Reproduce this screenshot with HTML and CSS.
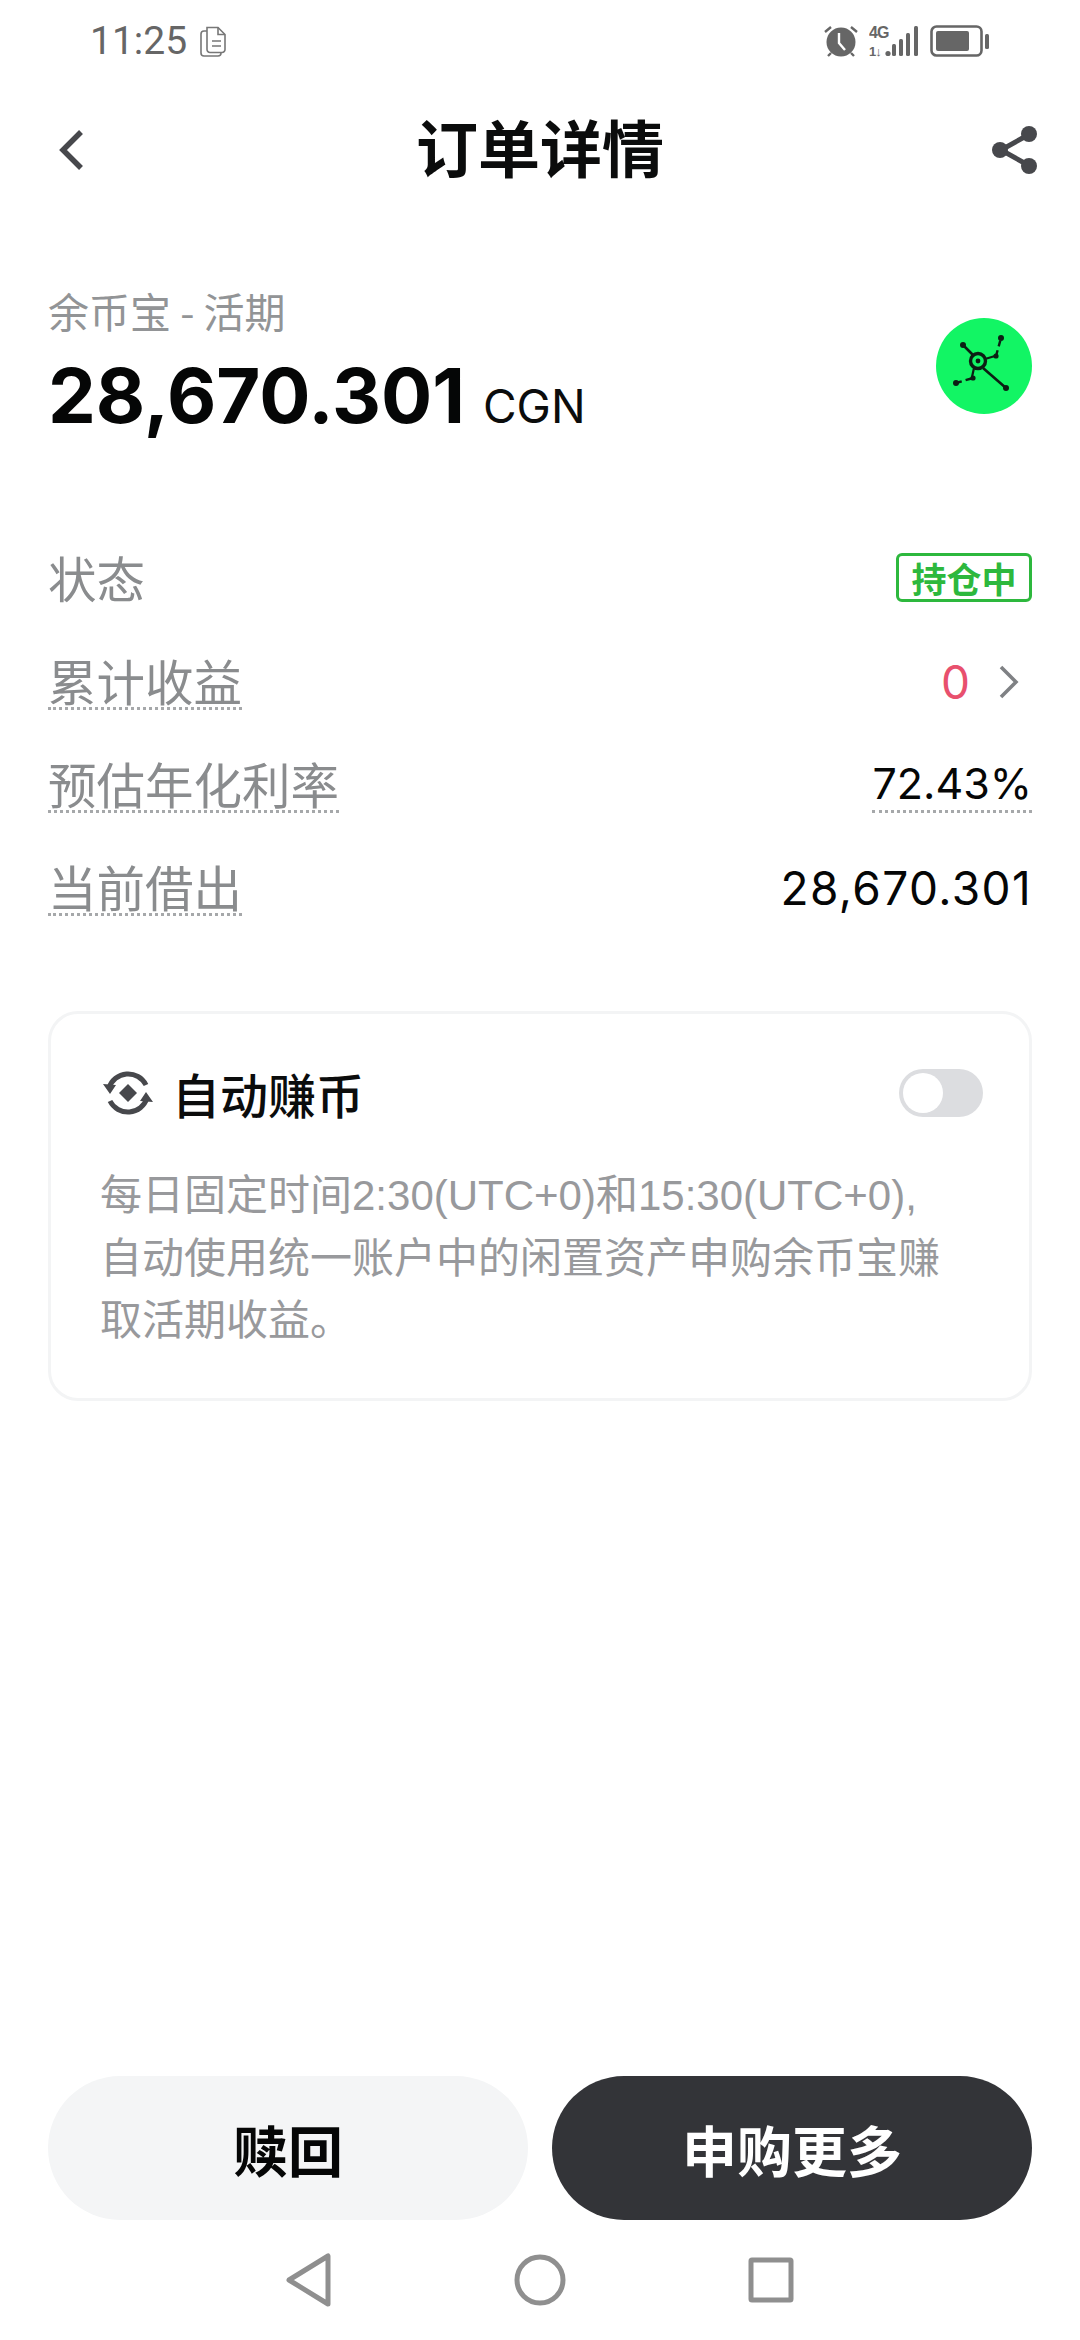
FILE: index.html
```html
<!DOCTYPE html>
<html lang="zh-CN">
<head>
<meta charset="utf-8">
<title>订单详情</title>
<link rel="stylesheet" href="styles.css">
</head>
<body>
<div class="page">
  <div class="status">
    <div class="status-left">
      <span class="time">11:25</span>
      <svg class="doc" width="27" height="31" viewBox="0 0 27 31" fill="none" stroke="#777" stroke-width="1.6">
        <path d="M7 1.5h11l7 7v15a3 3 0 0 1-3 3H10a3 3 0 0 1-3-3z" fill="#fff"/>
        <path d="M18 1.5v7h7M12 15h9M12 20h9"/>
        <path d="M7 5H4a3 3 0 0 0-3 3v19a3 3 0 0 0 3 3h14a3 3 0 0 0 3-3"/>
      </svg>
    </div>
    <div class="status-right">
      <svg width="34" height="32" viewBox="0 0 34 32">
        <circle cx="17" cy="17" r="14.5" fill="#666"/>
        <path d="M15 8v10l6 7" fill="none" stroke="#fff" stroke-width="2.4"/>
        <path d="M1 7l6-5M33 7l-6-5M7 28l-3 3M27 28l3 3" stroke="#666" stroke-width="2.4"/>
      </svg>
      <svg class="signal" width="50" height="40" viewBox="0 -4 50 40">
        <text x="0" y="13" class="sig-text">4G</text>
        <text x="0" y="31" class="sig-text sig-small">1↓</text>
        <circle cx="19" cy="28.5" r="2.6" fill="#666"/>
        <rect x="23" y="19" width="4" height="12" rx="1.5" fill="#666"/>
        <rect x="30" y="14" width="4" height="17" rx="1.5" fill="#666"/>
        <rect x="37" y="8" width="4" height="23" rx="1.5" fill="#666"/>
        <rect x="45" y="1" width="4" height="30" rx="1.5" fill="#666"/>
      </svg>
      <svg width="60" height="32" viewBox="0 0 60 32">
        <rect x="1.5" y="1.5" width="50" height="29" rx="5" fill="none" stroke="#666" stroke-width="2.6"/>
        <rect x="6" y="6" width="33" height="20" rx="2" fill="#666"/>
        <rect x="55" y="9" width="4" height="15" rx="1.5" fill="#666"/>
      </svg>
    </div>
  </div>

  <header class="nav">
    <svg class="back" width="26" height="40" viewBox="0 0 26 40" fill="none" stroke="#47484c" stroke-width="5.5">
      <path d="M23 2L5 20l18 18"/>
    </svg>
    <h1 class="title">订单详情</h1>
    <svg class="share" width="46" height="48" viewBox="0 0 46 48" fill="#47484c">
      <path d="M36 9L9 24l27 15" fill="none" stroke="#47484c" stroke-width="5"/>
      <circle cx="37" cy="8" r="8"/>
      <circle cx="8" cy="24" r="8"/>
      <circle cx="37" cy="40" r="8"/>
    </svg>
  </header>

  <section class="summary">
    <div>
      <div class="sub">余币宝 - 活期</div>
      <div class="amount"><span class="amount-num">28,670.301</span><span class="amount-unit">CGN</span></div>
    </div>
    <div class="logo">
      <svg width="96" height="96" viewBox="0 0 96 96" fill="none" stroke="#0c1f14" stroke-width="2">
        <circle cx="42" cy="43" r="7.5" stroke-width="3.4"/>
        <circle cx="42" cy="43" r="2.4" fill="#0c1f14" stroke="none"/>
        <path d="M27 27l10 10M47 50l23 20" stroke-width="2.6"/>
        <path d="M60 38l5-18M20 65l17-5" stroke-dasharray="6 4" stroke-width="2.4"/>
        <path d="M38 50l-2 9M49 41l10-3" stroke-width="2.2"/>
        <g fill="#0c1f14" stroke="none">
          <circle cx="27" cy="27" r="3"/>
          <circle cx="65" cy="20" r="3"/>
          <circle cx="60" cy="38" r="2.6"/>
          <circle cx="70" cy="70" r="3"/>
          <circle cx="20" cy="65" r="3"/>
          <circle cx="37" cy="60" r="2.6"/>
        </g>
      </svg>
    </div>
  </section>

  <section class="rows">
    <div class="row row-first">
      <span class="label">状态</span>
      <span class="badge">持仓中</span>
    </div>
    <div class="row">
      <span class="label dotted">累计收益</span>
      <span class="profit">
        <span class="zero">0</span>
        <svg width="22" height="34" viewBox="0 0 22 34" fill="none" stroke="#7f8184" stroke-width="3.6"><path d="M3 2l15 15L3 32"/></svg>
      </span>
    </div>
    <div class="row">
      <span class="label dotted">预估年化利率</span>
      <span class="value dotted">72.43%</span>
    </div>
    <div class="row">
      <span class="label dotted">当前借出</span>
      <span class="value value-wide">28,670.301</span>
    </div>
  </section>

  <section class="card">
    <div class="card-head">
      <div class="card-title">
        <svg width="52" height="48" viewBox="0 0 52 48" fill="none" stroke="#47484c" stroke-width="5">
          <path d="M7 19A20 20 0 0 1 44 16"/>
          <path d="M45 29A20 20 0 0 1 8 32"/>
          <path d="M1 15l13 1-6 9zM51 33l-13-1 6-9z" fill="#47484c" stroke="none"/>
          <path d="M26 15l9 9-9 9-9-9z" fill="#47484c" stroke="none"/>
        </svg>
        <span>自动赚币</span>
      </div>
      <div class="toggle"><span class="knob"></span></div>
    </div>
    <p class="desc">每日固定时间2:30(UTC+0)和15:30(UTC+0),<br>自动使用统一账户中的闲置资产申购余币宝赚<br>取活期收益。</p>
  </section>

  <div class="spacer"></div>

  <div class="actions">
    <button class="btn btn-light">赎回</button>
    <button class="btn btn-dark">申购更多</button>
  </div>

  <div class="sysnav">
    <svg width="46" height="54" viewBox="0 0 46 54" fill="none" stroke="#8f8f8f" stroke-width="5" stroke-linejoin="round"><path d="M42 3v48L3 27z"/></svg>
    <svg width="52" height="52" viewBox="0 0 52 52" fill="none" stroke="#8f8f8f" stroke-width="5"><circle cx="26" cy="26" r="23"/></svg>
    <svg width="46" height="46" viewBox="0 0 46 46" fill="none" stroke="#8f8f8f" stroke-width="5" stroke-linejoin="round"><rect x="3" y="3" width="40" height="40" rx="1"/></svg>
  </div>
</div>
</body>
</html>
```
FILE: styles.css
```css
* { box-sizing: border-box; }
html, body { margin: 0; padding: 0; background: #fff; }
body { font-family: "Noto Sans CJK SC", "Liberation Sans", sans-serif; }
.page { width: 1080px; height: 2340px; display: flex; flex-direction: column; overflow: hidden; }

.status { height: 82px; padding: 0 90px 0 90px; display: flex; justify-content: space-between; align-items: center; }
.status-left { display: flex; align-items: center; gap: 13px; }
.status-right { display: flex; align-items: center; gap: 11px; }
.time { font-family: Roboto, sans-serif; font-size: 39px; color: #666; line-height: 1; }
.sig-text { font-family: "Liberation Sans", sans-serif; font-size: 16px; font-weight: 700; letter-spacing: -1px; fill: #666; }
.sig-small { font-size: 13px; }

.nav { height: 136px; padding: 0 42px 0 58px; display: flex; justify-content: space-between; align-items: center; position: relative; }
.title { position: absolute; left: 0; right: 0; margin: 0; padding-bottom: 8px; text-align: center; font-size: 62px; font-weight: 700; color: #0b0c0c; line-height: 1; }

.summary { margin-top: 66px; padding: 0 48px; display: flex; justify-content: space-between; align-items: flex-start; }
.sub { font-size: 41px; line-height: 52px; color: #929496; }
.amount { display: flex; align-items: baseline; gap: 18px; margin-top: 13px; }
.amount-num { font-family: Inter, "Liberation Sans", sans-serif; font-size: 76px; font-weight: 700; line-height: 92px; color: #050606; }
.amount-unit { font-family: Inter, "Liberation Sans", sans-serif; font-size: 46px; color: #0b0c0c; }
.logo { width: 96px; height: 96px; margin-top: 34px; border-radius: 50%; background: #12f564; }
.logo svg { display: block; }

.rows { margin-top: 83px; padding: 0 48px; display: flex; flex-direction: column; }
.row { height: 103px; display: flex; justify-content: space-between; align-items: center; }
.row-first { height: 106px; }
.label { font-size: 48.5px; line-height: 54px; color: #8a8c8e; }
.dotted { border-bottom: 3px dotted #a6a8aa; }
.badge { width: 136px; height: 49px; border: 3px solid #2db83d; border-radius: 6px; color: #2db83d; font-size: 35px; font-weight: 700; line-height: 43px; text-align: center; }
.profit { display: flex; align-items: center; gap: 28px; padding-right: 12px; }
.zero { font-family: Inter, sans-serif; font-size: 46px; color: #e8506e; }
.value { font-family: Inter, sans-serif; font-size: 43px; line-height: 54px; color: #050606; }
.value-wide { font-size: 46px; letter-spacing: 1.4px; }

.card { margin: 72px 48px 0; height: 390px; padding: 51px 46px 0 49px; border: 3px solid #f3f4f5; border-radius: 30px; }
.card-head { display: flex; justify-content: space-between; align-items: center; }
.card-title { display: flex; align-items: center; gap: 18px; padding-left: 2px; font-size: 48px; font-weight: 500; color: #0b0c0c; line-height: 56px; }
.toggle { width: 84px; height: 48px; padding: 4px; border-radius: 24px; background: #dcdde0; }
.knob { display: block; width: 40px; height: 40px; border-radius: 50%; background: #fff; }
.desc { margin: 44px 0 0; font-size: 42px; line-height: 62.5px; color: #98999c; font-family: "Liberation Sans", "Noto Sans CJK SC", sans-serif; }

.spacer { flex: 1; }
.actions { padding: 0 48px; display: flex; gap: 24px; }
.btn { flex: 1; height: 144px; border: 0; border-radius: 72px; font-family: "Noto Sans CJK SC", sans-serif; font-size: 55px; font-weight: 700; }
.btn-light { background: #f4f5f6; color: #050606; }
.btn-dark { background: #333438; color: #fff; }
.sysnav { height: 120px; display: flex; justify-content: center; align-items: center; gap: 182px; }
.sysnav svg { display: block; }
```
